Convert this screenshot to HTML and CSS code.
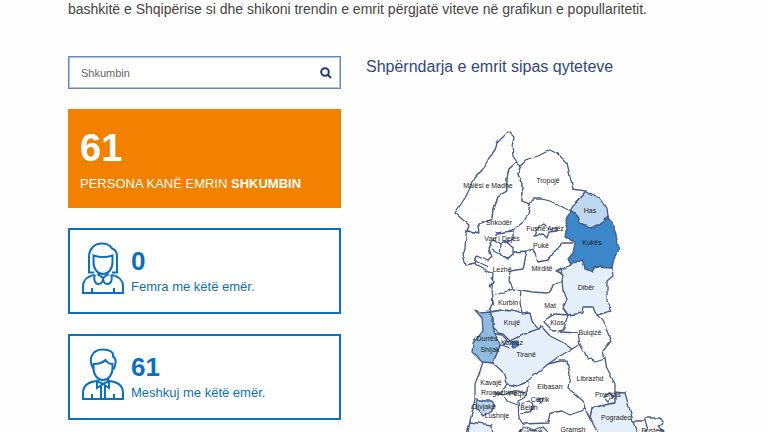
FILE: index.html
```html
<!DOCTYPE html>
<html lang="sq">
<head>
<meta charset="utf-8">
<title>Shpërndarja e emrave</title>
<link rel="stylesheet" href="styles.css">
</head>
<body>
<main class="page">
  <p class="intro">bashkitë e Shqipërise si dhe shikoni trendin e emrit përgjatë viteve në grafikun e popullaritetit.</p>
  <div class="columns">
    <div class="stats">
      <form class="search">
        <input class="search-input" type="text" value="Shkumbin" aria-label="Emri">
        <button class="search-button" type="submit" aria-label="Kërko">
          <svg width="12" height="12" viewBox="0 0 12 12"><circle cx="5" cy="5" r="3.8"/><path d="M7.8 7.8 11 11"/></svg>
        </button>
      </form>
      <section class="total">
        <strong class="total-number">61</strong>
        <span class="total-label">PERSONA KANË EMRIN <b>SHKUMBIN</b></span>
      </section>
      <section class="card">
        <svg class="person" viewBox="0 0 42 52">
          <path d="M12 30.500H7V15C7 7 12 1.500 20 1.500c5 0 8 1.500 10 5 3 1 5 4 5 8v16h-5"/>
          <path d="M11.500 13.500c6 2 13 2 19 0V20c0 7-4 12-9.500 12s-9.500-5-9.500-12zM16.500 31v3M25.500 31v3"/>
          <path d="M12 33C4 35 1 38 1 44v7h40v-7c0-6-3-9-11-11M10 46v5M32 46v5"/>
          <path d="M13 32.500c-2 5 0 9.500 3.500 9.500 3 0 4.500-3 4.500-6 0 3 1.500 6 4.500 6 3.500 0 5.500-4.500 3.500-9.500M16 32l5 4 5-4"/>
        </svg>
        <div class="card-text">
          <strong class="card-number">0</strong>
          <span class="card-label">Femra me këtë emër.</span>
        </div>
      </section>
      <section class="card">
        <svg class="person" viewBox="0 0 42 52">
          <path d="M11.500 21C6 12 9 1.500 21 1.500c7 0 11 3 10 7 4 2 3 8 .500 13"/>
          <path d="M11.500 16c5 0 9-1 12-4 2 3 5 4 7 4v4c0 7-4 12-9.500 12s-9.500-5-9.500-12zM16 30v3M26 30v3"/>
          <path d="M15 33C5 34 1 38 1 45v6h40v-6c0-7-4-11-14-12M10 46v5M32 46v5"/>
          <path d="M15 33v7l6-4 6 4v-7l-6 3zM19 38v13M23 38v13"/>
        </svg>
        <div class="card-text">
          <strong class="card-number">61</strong>
          <span class="card-label">Meshkuj me këtë emër.</span>
        </div>
      </section>
    </div>
    <section class="distribution">
      <h2 class="heading">Shpërndarja e emrit sipas qyteteve</h2>
      <svg class="map" viewBox="366 120 334 312" role="img" aria-label="Harta e qyteteve">
        <defs>
          <filter id="coast" x="-5%" y="-5%" width="110%" height="110%">
            <feTurbulence type="fractalNoise" baseFrequency=".13" numOctaves="1" seed="4" result="n"/>
            <feDisplacementMap in="SourceGraphic" in2="n" scale="4" xChannelSelector="R" yChannelSelector="G"/>
          </filter>
        </defs>
        <g class="regions" filter="url(#coast)">
          <path d="M508 131 497 142 495 150 489 157 483 168 475 177 472 183 465 197 455 212 469 224 467 230 480 232 479 223 492 218 493 208 497 196 507 190 507 178 509 168 517 161 513 155 512 145 514 137z"/>
          <path d="M517 161 521 164 518 173 522 182 522 200 530 203 528 213 522 222 512 230 497 232 493 239 489 248 492 256 488 260 477 255 475 263 466 265 463 253 465 247 466 234 467 230 480 232 479 223 492 218 493 208 497 196 507 190 507 178 509 168z"/>
          <path d="M521 164 528 158 538 155 550 149 558 153 567 162 570 175 573 188 586 190 575 202 570 210 557 203 543 198 533 198 530 203 522 200 522 182 518 173z"/>
          <path class="low" d="M586 190 600 197 607 207 608 215 600 224 590 226 580 222 576 212 570 210 575 202z"/>
          <path class="high" d="M570 210 565 222 567 227 565 235 575 242 573 252 568 258 571 264 582 258 585 268 592 271 595 266 612 267 614 257 619 248 616 233 611 220 608 215 600 224 590 226 580 222 576 212z"/>
          <path class="pale" d="M571 264 557 270 563 273 562 280 563 290 567 298 563 307 568 314 582 312 583 306 593 306 597 314 611 310 607 300 607 280 613 275 612 267 595 266 592 271 585 268 582 258z"/>
          <path class="line" d="M575 242 563 242 555 250 548 259 538 261 533 248 527 250 523 268 510 270 509 280 513 288 521 289 533 291 547 292 553 284 563 280M527 250 514 251 511 256 505 258 499 252 492 248M501 244 507 240 513 246 513 254 507 259 500 253zM493 239 501 244 513 237 513 230M537 227 544 223 549 228 556 226 557 230 549 231 547 237 543 233 534 235zM556 270 561 267 562 273z"/>
          <path class="line" d="M475 263 493 273 492 287 493 300 489 311M475 260 488 266M513 288 493 295M521 289 520 300 522 313 512 310 502 309 489 311M491 276 493 281 490 285M491 298 494 303"/>
          <path class="pale" d="M489 311 502 309 512 310 522 313 530 312 532 320 538 328 529 331 520 335 510 340 503 333 498 332 493 327 493 317z"/>
          <path class="mid" d="M475 309 482 312 489 311 493 317 493 327 495 333 500 345 493 362 483 361 477 355 472 350 473 342 483 330 482 317z"/>
          <path class="pale" d="M538 328 541 325 550 335 562 341 572 348 560 355 548 363 540 370 525 382 517 385 507 383 505 373 493 362 500 345 506 342 510 340 520 335z"/>
          <path class="high" d="M511 342 515 340 519 344 514 347z"/>
          <path class="line" d="M563 307 568 314 555 313 543 320 553 330 563 329 568 314M563 329 560 331 578 332 580 343 572 348M538 328 540 323M495 333 502 334 507 339 502 344 510 347"/>
          <path class="line" d="M580 343 585 352 587 358 590 357 595 361 605 358 603 350 611 340 605 325 602 319 597 314"/>
          <path class="line" d="M548 363 560 360 567 360 570 373 568 388 575 393 583 400 585 407 590 417 592 407 615 402 615 383 607 367 605 358"/>
          <path class="pale" d="M592 407 604 404 615 402 615 391 625 392 629 406 633 420 638 436 600 436 590 417z"/>
          <path class="line" d="M633 420 645 420 645 417 660 417 664 423 658 425 664 431 658 429M645 420 648 427 644 432M610 391 613 395 608 401 604 397z"/>
          <path class="line" d="M585 407 578 411 570 414 562 410 550 412 548 422 523 423 519 417 518 400 524 397 527 392 528 380 520 384M507 383 501 392 494 392 504 394 514 389 525 392M505 396 507 400 518 404 529 400 533 404 530 411 521 412M538 399 543 397 542 402z"/>
          <path class="line" d="M483 361 480 370 475 383 475 398 473 407 470 420 467 436M515 436 523 426 534 430 543 426 549 432"/>
          <path class="pale" d="M470 421 492 424 493 436 467 436z"/>
          <path class="low" d="M477 398 485 400 492 400 495 405 491 410 483 415 476 407z"/>
        </g>
        <g class="names">
          <text x="488" y="187">Malësi e Madhe</text>
          <text x="548" y="182">Tropojë</text>
          <text x="590" y="212">Has</text>
          <text x="499" y="224">Shkodër</text>
          <text x="545" y="230">Fushë Arrëz</text>
          <text x="502" y="240">Vau i Dejës</text>
          <text x="541" y="247">Pukë</text>
          <text x="592" y="244">Kukës</text>
          <text x="502" y="271">Lezhë</text>
          <text x="542" y="270">Mirditë</text>
          <text x="586" y="289">Dibër</text>
          <text x="508" y="304">Kurbin</text>
          <text x="550" y="307">Mat</text>
          <text x="512" y="324">Krujë</text>
          <text x="557" y="324">Klos</text>
          <text x="590" y="334">Bulqizë</text>
          <text x="487" y="340">Durrës</text>
          <text x="512" y="344">Kamëz</text>
          <text x="490" y="351">Shijak</text>
          <text x="526" y="356">Tiranë</text>
          <text x="491" y="384">Kavajë</text>
          <text x="550" y="388">Elbasan</text>
          <text x="590" y="380">Librazhd</text>
          <text x="499" y="394">Rrogozhinë</text>
          <text x="518" y="395">Peqin</text>
          <text x="540" y="401">Cërrik</text>
          <text x="608" y="396">Prrenjas</text>
          <text x="484" y="408">Divjakë</text>
          <text x="529" y="409">Belsh</text>
          <text x="497" y="417">Lushnje</text>
          <text x="616" y="419">Pogradec</text>
          <text x="573" y="431">Gramsh</text>
          <text x="531" y="433">Kuçovë</text>
          <text x="652" y="432">Pustec</text>
        </g>
      </svg>
    </section>
  </div>
</main>
</body>
</html>
```
FILE: styles.css
```css
* { box-sizing: border-box; }
body {
  margin: 0;
  background: #fefefe;
  color: #444;
  font-family: "Liberation Sans", Arial, sans-serif;
}
.page { padding: 0 68px; overflow: hidden; }
.intro {
  margin: 0 0 38px;
  font-size: 14px;
  line-height: 18px;
}
.columns {
  display: grid;
  grid-template-columns: 273px minmax(0, 1fr);
  column-gap: 25px;
  align-items: start;
}
.stats { display: flex; flex-direction: column; gap: 20px; }
.search {
  display: flex;
  align-items: center;
  height: 33px;
  padding: 0 8px 0 12px;
  border: 1px solid #6387bd;
  outline: 1px solid #b2c3de;
  outline-offset: -2px;
  background: #fff;
}
.search-input {
  flex: 1;
  min-width: 0;
  padding: 0;
  border: 0;
  outline: 0;
  background: none;
  color: #666;
  font: 11px "Liberation Sans", Arial, sans-serif;
}
.search-button {
  display: flex;
  padding: 0;
  border: 0;
  background: none;
}
.search-button svg { fill: none; stroke: #243e72; stroke-width: 2; }
.total {
  display: flex;
  flex-direction: column;
  gap: 8px;
  padding: 19px 12px 16px;
  background: #f28100;
  color: #fff;
}
.total-number { font-size: 38px; line-height: 40px; }
.total-label { font-size: 13px; line-height: 16px; }
.card {
  display: flex;
  align-items: center;
  gap: 7px;
  height: 86px;
  padding: 0 12px;
  border: 2px solid #0b70bd;
  background: #fff;
  color: #0b70bd;
}
.person {
  width: 42px;
  height: 52px;
  margin-bottom: 6px;
  fill: none;
  stroke: #0b70bd;
  stroke-width: 2;
}
.card-text { display: flex; flex-direction: column; gap: 4px; }
.card-number { font-size: 26px; line-height: 28px; }
.card-label { font-size: 13px; line-height: 16px; }
.heading {
  margin: 0 0 43px;
  color: #30487b;
  font-size: 16px;
  font-weight: 400;
  line-height: 22px;
}
.map { display: block; width: 100%; }
.regions { fill: #fff; stroke: #465b8a; stroke-width: 1.3; stroke-linejoin: round; }
.regions .line { fill: none; }
.regions .pale { fill: #e5effa; }
.regions .low { fill: #bdd7ee; }
.regions .mid { fill: #8ebbdf; }
.regions .high { fill: #3b87ca; }
.names { fill: #222; font-size: 7px; text-anchor: middle; }
```
